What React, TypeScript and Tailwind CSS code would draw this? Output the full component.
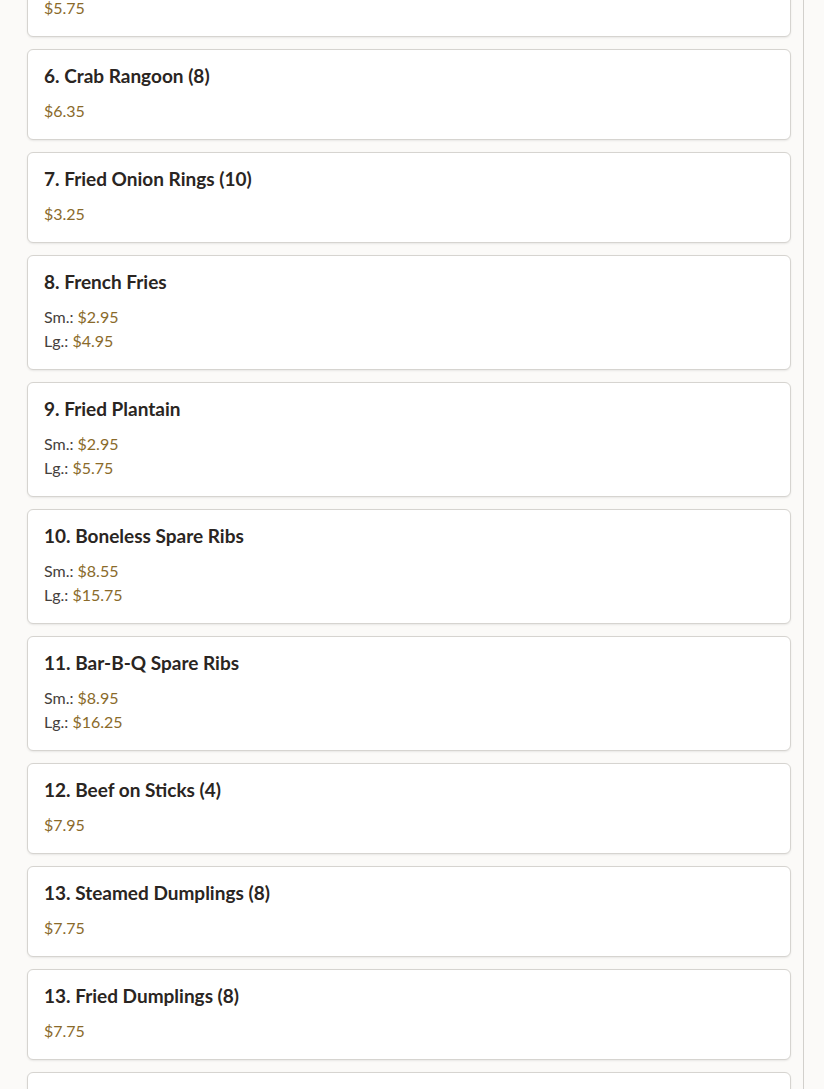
import React from 'react';

interface MenuItem {
  name: string;
  price?: string;
  sizes?: { label: string; price: string }[];
}

const items: MenuItem[] = [
  { name: '5. Chicken Wings (4)', price: '$5.75' },
  { name: '6. Crab Rangoon (8)', price: '$6.35' },
  { name: '7. Fried Onion Rings (10)', price: '$3.25' },
  { name: '8. French Fries', sizes: [{ label: 'Sm.:', price: '$2.95' }, { label: 'Lg.:', price: '$4.95' }] },
  { name: '9. Fried Plantain', sizes: [{ label: 'Sm.:', price: '$2.95' }, { label: 'Lg.:', price: '$5.75' }] },
  { name: '10. Boneless Spare Ribs', sizes: [{ label: 'Sm.:', price: '$8.55' }, { label: 'Lg.:', price: '$15.75' }] },
  { name: '11. Bar-B-Q Spare Ribs', sizes: [{ label: 'Sm.:', price: '$8.95' }, { label: 'Lg.:', price: '$16.25' }] },
  { name: '12. Beef on Sticks (4)', price: '$7.95' },
  { name: '13. Steamed Dumplings (8)', price: '$7.75' },
  { name: '13. Fried Dumplings (8)', price: '$7.75' },
  { name: '14. Fried Wonton (10)', price: '$4.25' },
];

const MenuCard: React.FC<{ item: MenuItem }> = ({ item }) => (
  <div className="bg-white border border-[#d6d4d0] rounded-md shadow-[0_1px_2px_rgba(0,0,0,0.08)] px-4 pt-4 pb-4">
    <h3 className="text-[19px] leading-[20px] font-bold text-[#2a2522] mb-[13px]">{item.name}</h3>
    {item.price && <div className="text-[16px] leading-6 text-[#8a6a2a]">{item.price}</div>}
    {item.sizes &&
      item.sizes.map((s) => (
        <div key={s.label} className="text-[16px] leading-6 text-[#45403c]">
          {s.label} <span className="text-[#8a6a2a]">{s.price}</span>
        </div>
      ))}
  </div>
);

export default function App() {
  return (
    <div className="min-h-screen bg-[#fbfaf8] overflow-hidden" style={{ fontFamily: 'Lato, "Noto Sans", sans-serif' }}>
      <div className="w-[804px] h-[1089px] border-r border-[#d2d0cc] pl-[27px] pr-[12px] overflow-hidden">
        <div className="flex flex-col gap-3 -mt-[54px]">
          {items.map((item, i) => (
            <MenuCard key={i} item={item} />
          ))}
        </div>
      </div>
    </div>
  );
}
